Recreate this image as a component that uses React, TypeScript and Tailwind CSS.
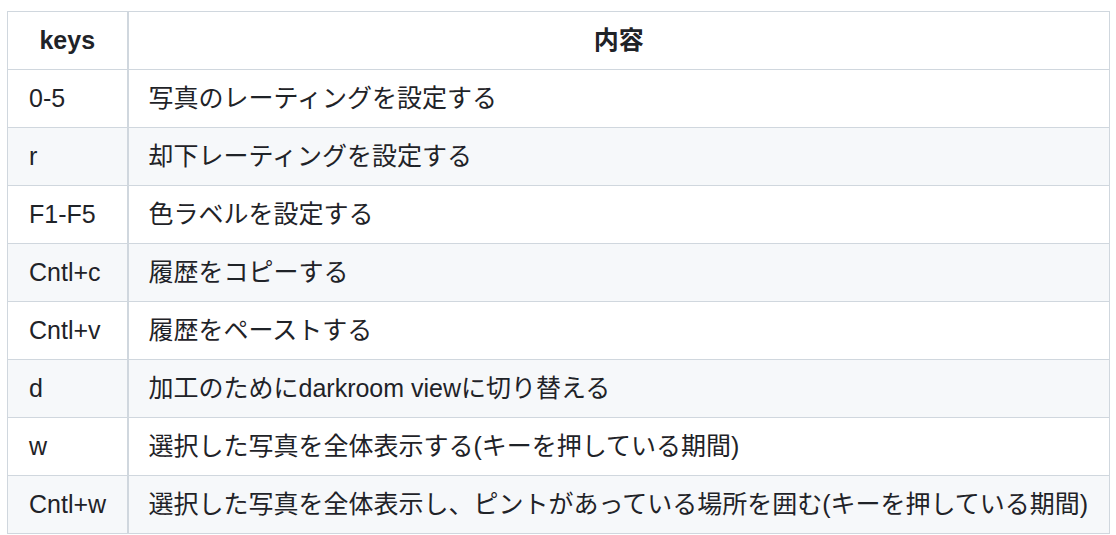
const rows: [string, string][] = [
  ["0-5", "写真のレーティングを設定する"],
  ["r", "却下レーティングを設定する"],
  ["F1-F5", "色ラベルを設定する"],
  ["Cntl+c", "履歴をコピーする"],
  ["Cntl+v", "履歴をペーストする"],
  ["d", "加工のためにdarkroom viewに切り替える"],
  ["w", "選択した写真を全体表示する(キーを押している期間)"],
  ["Cntl+w", "選択した写真を全体表示し、ピントがあっている場所を囲む(キーを押している期間)"],
];

export default function App() {
  return (
    <div className="bg-white w-[1116px] h-[535px] pt-[11px] pl-[7px] font-['Liberation_Sans','Noto_Sans_CJK_JP',sans-serif] text-[25px] text-[#1f2328]">
      <table className="border-collapse">
        <thead>
          <tr className="h-[58px] bg-white">
            <th className="w-[120px] border border-[#d0d7de] border-r-2 font-bold text-center">keys</th>
            <th className="w-[982px] border border-[#d0d7de] font-bold text-center">内容</th>
          </tr>
        </thead>
        <tbody>
          {rows.map(([k, v], i) => (
            <tr key={k} className={i % 2 === 1 ? "h-[58px] bg-[#f6f8fa]" : "h-[58px] bg-white"}>
              <td className="border border-[#d0d7de] border-r-2 pl-[21px] whitespace-nowrap">{k}</td>
              <td className="border border-[#d0d7de] pl-[20px] whitespace-nowrap">{v}</td>
            </tr>
          ))}
        </tbody>
      </table>
    </div>
  );
}
